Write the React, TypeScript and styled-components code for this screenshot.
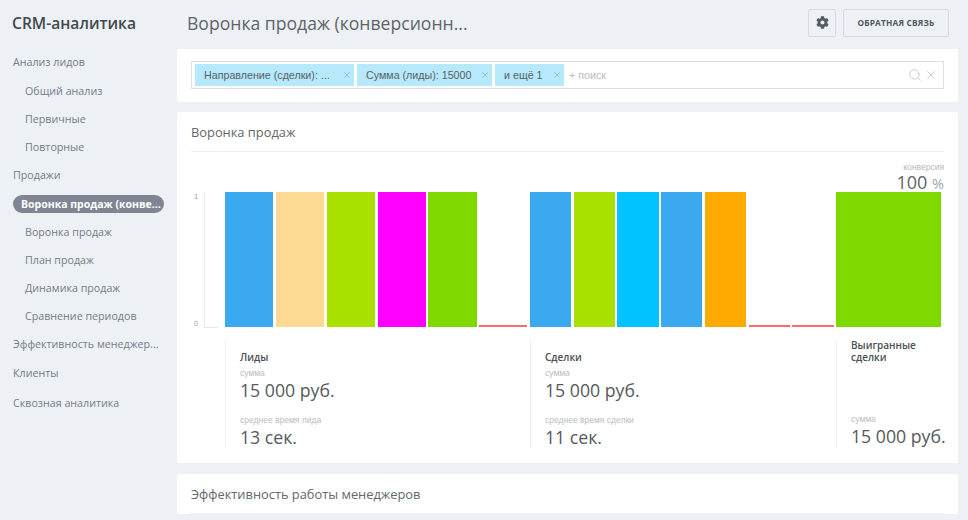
import React from 'react';
import { FaCog } from 'react-icons/fa';
import { Search, X } from 'lucide-react';
import styled, { createGlobalStyle } from 'styled-components';

const GlobalStyle = createGlobalStyle`
  html, body {
    margin: 0;
    height: 520px;
    overflow: hidden;
    background: #edf1f5;
    font-family: "Open Sans", sans-serif;
  }
`;

const Page = styled.div`
  display: flex;
  width: 968px;
  height: 520px;
  overflow: hidden;
`;

const Sidebar = styled.aside`
  width: 177px;
  flex: none;
  padding: 12px 13px 0 13px;
  box-sizing: border-box;
`;

const Logo = styled.div`
  margin-left: -1px;
  font-size: 15.6px;
  line-height: 22px;
  font-weight: 600;
  color: #42484e;
  margin-bottom: 13px;
`;

const NavItem = styled.div<{ $sub?: boolean; $tall?: boolean }>`
  height: ${(p) => (p.$tall ? 30 : 28)}px;
  line-height: ${(p) => (p.$tall ? 30 : 28)}px;
  padding-left: ${(p) => (p.$sub ? 12 : 0)}px;
  font-size: 10.7px;
  color: #757c85;
  white-space: nowrap;
`;

const ActiveItem = styled.div`
  height: 18px;
  line-height: 18px;
  margin: 6px 0 5px;
  padding-left: 8px;
  border-radius: 9px;
  background: #7f8592;
  color: #fff;
  font-size: 10.5px;
  font-weight: 700;
  white-space: nowrap;
`;

const Main = styled.main`
  width: 781px;
  flex: none;
  display: flex;
  flex-direction: column;
`;

const Header = styled.header`
  height: 49px;
  flex: none;
  display: flex;
  align-items: center;
  padding: 0 9px 4px 10px;
  box-sizing: border-box;
  gap: 7px;
`;

const Title = styled.h1`
  flex: 1;
  margin: 0;
  font-size: 17.6px;
  font-weight: 400;
  color: #5f6468;
`;

const HeaderButton = styled.button<{ $width: number }>`
  width: ${(p) => p.$width}px;
  height: 28px;
  padding: 0;
  display: flex;
  align-items: center;
  justify-content: center;
  background: #edf1f5;
  border: 1px solid #d5dade;
  border-radius: 2px;
  color: #525a66;
  font-family: "Open Sans", sans-serif;
  font-size: 8.3px;
  font-weight: 700;
  letter-spacing: 0.2px;
  text-transform: uppercase;
`;

const Card = styled.section`
  background: #fff;
  border-radius: 2px;
  margin-bottom: 11px;
  padding: 0 14px;
  flex: none;
`;

const FilterCard = styled(Card)`
  height: 53px;
  margin-bottom: 10px;
  padding-top: 12px;
  box-sizing: border-box;
`;

const FilterBox = styled.div`
  height: 28px;
  box-sizing: border-box;
  border: 1px solid #dcdfe2;
  display: flex;
  align-items: center;
  padding: 0 5px 0 3px;
  gap: 3px;
  font-family: "Liberation Sans", sans-serif;
`;

const Chip = styled.div<{ $width: number }>`
  width: ${(p) => p.$width}px;
  height: 22px;
  flex: none;
  box-sizing: border-box;
  background: #b5e9fb;
  padding: 0 2px 0 9px;
  display: flex;
  align-items: center;
  justify-content: space-between;
  font-size: 10.7px;
  color: #5a5f66;
  white-space: nowrap;

  svg {
    color: #a3b4bb;
    flex: none;
  }
`;

const SearchHint = styled.div`
  flex: 1;
  margin-left: 2px;
  font-size: 10.7px;
  color: #b9bdc1;
`;

const FilterIcons = styled.div`
  display: flex;
  align-items: center;
  gap: 2.5px;
  color: #c4c8cc;
`;

const CardTitle = styled.div`
  height: 39px;
  line-height: 40px;
  font-size: 12.85px;
  color: #62676b;
  border-bottom: 1px solid #eff1f3;
`;

const Conversion = styled.div`
  height: 40px;
  padding-top: 10px;
  box-sizing: border-box;
  text-align: right;
`;

const ConversionLabel = styled.div`
  font-family: "Liberation Sans", sans-serif;
  font-size: 8.5px;
  line-height: 10px;
  color: #b4b8bc;
`;

const ConversionValue = styled.div`
  font-size: 18px;
  line-height: 20px;
  color: #5f6468;

  small {
    font-size: 14.5px;
    color: #9ba3ab;
  }
`;

const Chart = styled.div`
  display: flex;
  height: 136px;
  gap: 2.5px;
`;

const Axis = styled.div`
  width: 31.5px;
  flex: none;
  box-sizing: border-box;
  padding-right: 5px;
  display: flex;
`;

const AxisLabels = styled.div`
  width: 13px;
  flex: none;
  display: flex;
  flex-direction: column;
  justify-content: space-between;
  padding: 0 0 0 3px;
  box-sizing: border-box;
  font-family: "Liberation Sans", sans-serif;
  font-size: 7.5px;
  line-height: 9px;
  color: #a0a4a8;
`;

const AxisLine = styled.div`
  flex: 1;
  border-left: 1px solid #e8eaec;
  border-bottom: 1px solid #e4e6e8;
`;

const Bars = styled.div<{ $gap: number; $width: number }>`
  width: ${(p) => p.$width}px;
  flex: none;
  display: flex;
  gap: ${(p) => p.$gap}px;
  align-items: flex-end;
`;

const Bar = styled.div<{ $color: string; $flat?: boolean }>`
  flex: 1;
  height: ${(p) => (p.$flat ? '2px' : '135px')};
  margin-bottom: 1px;
  background: ${(p) => p.$color};
`;

const Stats = styled.div`
  display: flex;
  height: 108px;
  margin: 12px 0 15px 34px;
`;

const StatColumn = styled.div<{ $width: number }>`
  width: ${(p) => p.$width}px;
  flex: none;
  box-sizing: border-box;
  border-left: 1px solid #eff1f3;
  padding-left: 14px;
  display: flex;
  flex-direction: column;

  > * {
    flex: none;
  }
`;

const StatTitle = styled.div`
  height: 28px;
  display: flex;
  align-items: flex-end;
  padding-bottom: 5px;
  box-sizing: border-box;
  font-size: 10px;
  line-height: 11.5px;
  font-weight: 600;
  color: #4a4f54;
`;

const StatLabel = styled.div`
  font-family: "Liberation Sans", sans-serif;
  font-size: 8.5px;
  line-height: 10px;
  color: #b9bdc1;
`;

const StatValue = styled.div`
  font-size: 17.7px;
  line-height: 24px;
  margin-bottom: 13px;
  color: #55595d;
  white-space: nowrap;
`;

const WonStats = styled.div`
  margin-top: 46px;
`;

const groupOne = ['#3aa9f0', '#fdd994', '#a9e000', '#ff00ff', '#7fd800', '#ff6b6b'];
const groupTwo = ['#3aa9f0', '#a9e000', '#00c3ff', '#3aa9f0', '#ffaa00', '#ff6b6b', '#ff6b6b'];

const navTop = [
  { label: 'Анализ лидов', tall: true },
  { label: 'Общий анализ', sub: true },
  { label: 'Первичные', sub: true },
  { label: 'Повторные', sub: true },
  { label: 'Продажи' },
];

const navBottom = [
  { label: 'Воронка продаж', sub: true },
  { label: 'План продаж', sub: true },
  { label: 'Динамика продаж', sub: true },
  { label: 'Сравнение периодов', sub: true },
  { label: 'Эффективность менеджер...' },
  { label: 'Клиенты', tall: true },
  { label: 'Сквозная аналитика', tall: true },
];

export default function App() {
  return (
    <Page>
      <GlobalStyle />
      <Sidebar>
        <Logo>CRM-аналитика</Logo>
        {navTop.map(({ label, sub, tall }) => (
          <NavItem key={label} $sub={sub} $tall={tall}>
            {label}
          </NavItem>
        ))}
        <ActiveItem>Воронка продаж (конве...</ActiveItem>
        {navBottom.map(({ label, sub, tall }) => (
          <NavItem key={label} $sub={sub} $tall={tall}>
            {label}
          </NavItem>
        ))}
      </Sidebar>

      <Main>
        <Header>
          <Title>Воронка продаж (конверсионн...</Title>
          <HeaderButton $width={28}>
            <FaCog size={13} />
          </HeaderButton>
          <HeaderButton $width={106}>Обратная связь</HeaderButton>
        </Header>

        <FilterCard>
          <FilterBox>
            <Chip $width={159}>
              Направление (сделки): ...
              <X size={10} strokeWidth={2} />
            </Chip>
            <Chip $width={135}>
              Сумма (лиды): 15000
              <X size={10} strokeWidth={2} />
            </Chip>
            <Chip $width={69}>
              и ещё 1
              <X size={10} strokeWidth={2} />
            </Chip>
            <SearchHint>+ поиск</SearchHint>
            <FilterIcons>
              <Search size={14} strokeWidth={1.5} />
              <X size={14} strokeWidth={1.5} />
            </FilterIcons>
          </FilterBox>
        </FilterCard>

        <Card>
          <CardTitle>Воронка продаж</CardTitle>
          <Conversion>
            <ConversionLabel>конверсия</ConversionLabel>
            <ConversionValue>
              100 <small>%</small>
            </ConversionValue>
          </Conversion>
          <Chart>
            <Axis>
              <AxisLabels>
                <span>1</span>
                <span>0</span>
              </AxisLabels>
              <AxisLine />
            </Axis>
            <Bars $gap={2.7} $width={302.5}>
              {groupOne.map((color, i) => (
                <Bar key={i} $color={color} $flat={i === 5} />
              ))}
            </Bars>
            <Bars $gap={2.5} $width={303.5}>
              {groupTwo.map((color, i) => (
                <Bar key={i} $color={color} $flat={i > 4} />
              ))}
            </Bars>
            <Bars $gap={0} $width={105}>
              <Bar $color="#7fd800" />
            </Bars>
          </Chart>
          <Stats>
            <StatColumn $width={305}>
              <StatTitle>Лиды</StatTitle>
              <StatLabel>сумма</StatLabel>
              <StatValue>15 000 руб.</StatValue>
              <StatLabel>среднее время лида</StatLabel>
              <StatValue>13 сек.</StatValue>
            </StatColumn>
            <StatColumn $width={306}>
              <StatTitle>Сделки</StatTitle>
              <StatLabel>сумма</StatLabel>
              <StatValue>15 000 руб.</StatValue>
              <StatLabel>среднее время сделки</StatLabel>
              <StatValue>11 сек.</StatValue>
            </StatColumn>
            <StatColumn $width={108}>
              <StatTitle>
                <span>
                  Выигранные
                  <br />
                  сделки
                </span>
              </StatTitle>
              <WonStats>
                <StatLabel>сумма</StatLabel>
                <StatValue>15 000 руб.</StatValue>
              </WonStats>
            </StatColumn>
          </Stats>
        </Card>

        <Card>
          <CardTitle>Эффективность работы менеджеров</CardTitle>
        </Card>
      </Main>
    </Page>
  );
}
